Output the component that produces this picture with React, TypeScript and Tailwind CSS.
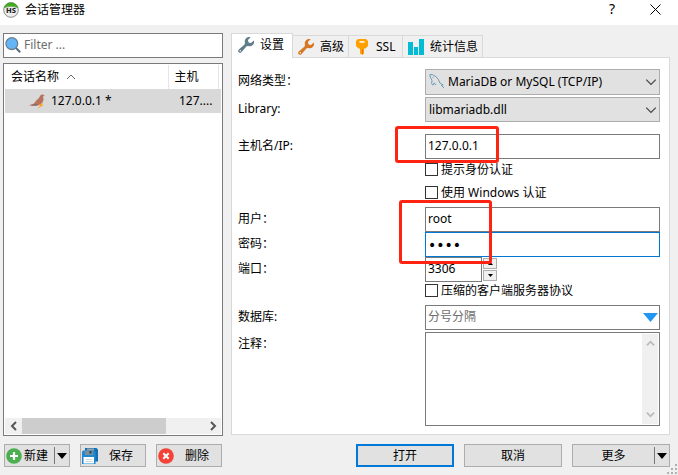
import { useState, type ReactNode } from "react";

const face = "font-['Noto_Sans','Noto_Sans_CJK_SC',sans-serif]";
const fieldBox = "h-[25px] w-full border border-[#7a7a7a] bg-white px-[2px] pb-[3px] text-xs text-black outline-none";
const buttonBox = "flex h-[23px] items-center border border-[#adadad] bg-[#e1e1e1] text-xs";

function AppLogo() {
  return (
    <svg className="size-4" viewBox="0 0 16 16" aria-hidden="true">
      <circle cx="8" cy="8" r="7.3" fill="#ededed" stroke="#8b8b8b" />
      <path d="M1.2 5.6A7.2 7.2 0 0 1 14.8 5.6Q8 2.8 1.2 5.6Z" fill="#3fae1c" stroke="#4b8f35" strokeWidth=".6" />
      <text x="8" y="11.3" textAnchor="middle" fontSize="7.5" fontWeight="800" fill="#222">HS</text>
    </svg>
  );
}

function Search() {
  return (
    <svg className="size-4 shrink-0" viewBox="0 0 16 16" aria-hidden="true">
      <path d="M10.5 10.5L15.2 15.2" stroke="#546e7a" strokeWidth="2" />
      <circle cx="6.8" cy="6.6" r="5.9" fill="#64b5f6" stroke="#6a8090" strokeWidth="1.3" />
    </svg>
  );
}

function Wrench({ className }: { className: string }) {
  return (
    <svg className={`size-4 shrink-0 ${className}`} viewBox="0 0 16 16" aria-hidden="true">
      <path
        d="M12.6 .2A4.4 4.4 0 0 0 7 5.8L6.6 7.6L.8 12.6A1.8 1.8 0 0 0 3.4 15.2L8.6 9.3L10.3 9A4.4 4.4 0 0 0 15.8 3.4L13 6.1L10.6 5.4L9.9 3Z"
        fill="currentColor"
      />
      <circle cx="2.3" cy="13.7" r=".7" fill="#fff" />
    </svg>
  );
}

function SeaLion() {
  return (
    <svg className="size-4" viewBox="0 0 16 16" aria-hidden="true">
      <path d="M0 12.6L2 11.4L5 10.6L7.5 7.2L10 5L11.3 2.4L13 1.2L15.8 2.4L14 3.6L14.6 6.5L13.4 9.8L11 11.6L7 12.4L3 12.2Z" fill="#b9735d" />
      <path d="M1 12.8L5 11.3L10 11L8 12.8Z" fill="#8c6a68" />
      <path d="M14 9.4L9 12.6H11.2L8.6 15.8L14.8 11.8H12.6Z" fill="#ff9d1e" />
    </svg>
  );
}

function Dolphin() {
  return (
    <svg className="size-4" viewBox="0 0 16 16" fill="none" stroke="#5d96b4" strokeWidth=".9" aria-hidden="true">
      <path d="M4 12.2L2.6 10.6L3 7.4L1.2 4L.9 1.6L3.4 1.7L7.2 3.8L9.6 6.8L10.9 10L14.2 12L12.4 12.4L15 15" />
      <path d="M4 12.2L5.2 9.8L7 12" />
      <path d="M3.4 4L4.2 4.8" />
    </svg>
  );
}

function Key() {
  return (
    <svg className="size-4" viewBox="0 0 16 16" aria-hidden="true">
      <path d="M4 0H12L14 2V7L11.5 9.6H10V14.5L8.4 16L6 14.5V9.6H4.5L2 7V2Z" fill="#ffa000" />
      <rect x="5.5" y="2" width="5" height="1.8" fill="#fff3d6" />
      <path d="M8.6 10V15" stroke="#d67c05" />
    </svg>
  );
}

function Bars() {
  return (
    <svg className="size-4" viewBox="0 0 16 16" fill="#00bcd4" aria-hidden="true">
      <path d="M0 3H5V16H0ZM6 8H10V16H6ZM11 0H16V16H11Z" />
    </svg>
  );
}

function Plus() {
  return (
    <svg className="size-4" viewBox="0 0 16 16" aria-hidden="true">
      <circle cx="8" cy="8" r="7.8" fill="#4caf50" />
      <path d="M8 4V12M4 8H12" stroke="#fff" strokeWidth="2.2" />
    </svg>
  );
}

function Cross() {
  return (
    <svg className="size-4" viewBox="0 0 16 16" aria-hidden="true">
      <circle cx="8" cy="8" r="7.8" fill="#f44336" />
      <path d="M5.3 5.3L10.7 10.7M10.7 5.3L5.3 10.7" stroke="#fff" strokeWidth="2" />
    </svg>
  );
}

function Disks() {
  return (
    <svg className="size-4" viewBox="0 0 16 16" aria-hidden="true">
      <path d="M3 0H14.5L16 1.5V13.5H3Z" fill="#1170b4" />
      <path d="M0 3.5L1 2.5H12L13.5 4V16H0Z" fill="#1e88d2" />
      <path d="M5 .5H12V2.5H5Z" fill="#90a4ae" />
      <path d="M3 2.5H11V7H3Z" fill="#78909c" />
      <path d="M7.5 3H9.5V5.5H7.5Z" fill="#263f50" />
      <path d="M1.5 9H12V15.5H1.5Z" fill="#fff" />
      <path d="M3.5 11.5H10.5M3.5 13.5H10.5" stroke="#cfd8dc" />
    </svg>
  );
}

function Chevron({ dir, className }: { dir: "up" | "down" | "left" | "right"; className: string }) {
  const d = { up: "M1 7L5 3L9 7", down: "M1 3L5 7L9 3", left: "M7 1L3 5L7 9", right: "M3 1L7 5L3 9" }[dir];
  return (
    <svg className={className} viewBox="0 0 10 10" fill="none" stroke="currentColor" aria-hidden="true">
      <path d={d} />
    </svg>
  );
}

function Triangle({ className }: { className: string }) {
  return (
    <svg className={className} viewBox="0 0 10 5" preserveAspectRatio="none" fill="currentColor" aria-hidden="true">
      <path d="M0 0H10L5 5Z" />
    </svg>
  );
}

function Row({ id, label, className, children }: { id: string; label: string; className?: string; children: ReactNode }) {
  return (
    <div className={`flex ${className ?? ""}`}>
      <label htmlFor={id} className="flex h-6 w-[187px] shrink-0 items-center">{label}</label>
      <div className="relative min-w-0 flex-1">{children}</div>
    </div>
  );
}

function Check({ children, className }: { children: ReactNode; className: string }) {
  return (
    <label className={`ml-[187px] flex h-[13px] items-center gap-[3px] ${className}`}>
      <input type="checkbox" className="size-[13px] appearance-none border border-[#333] bg-white checked:bg-[#0078d7]" />
      {children}
    </label>
  );
}

function Combo({ id, value, icon, className }: { id: string; value: string; icon?: ReactNode; className: string }) {
  return (
    <>
      <select id={id} className={`w-full appearance-none border border-[#adadad] bg-[#e1e1e1] pr-6 text-xs outline-none ${className}`}>
        <option>{value}</option>
      </select>
      {icon && <span className="pointer-events-none absolute top-1 left-1">{icon}</span>}
      <Chevron dir="down" className="pointer-events-none absolute top-[7px] right-[3px] size-3 text-[#444]" />
    </>
  );
}

const tabs = [
  { name: "设置", icon: <Wrench className="text-[#607d8b]" />, width: "w-[62px]" },
  { name: "高级", icon: <Wrench className="text-[#d87722]" />, width: "w-[56px]" },
  { name: "SSL", icon: <Key />, width: "w-[54px]" },
  { name: "统计信息", icon: <Bars />, width: "w-[80px]" },
];

function Tabs() {
  const [current, setCurrent] = useState(0);
  return (
    <div role="tablist" className="flex h-6 items-end">
      {tabs.map((tab, i) => (
        <button
          key={tab.name}
          role="tab"
          aria-selected={i === current}
          onClick={() => setCurrent(i)}
          className={`flex items-center gap-[6px] whitespace-nowrap border-t border-r border-[#d9d9d9] ${tab.width} ${
            i === current ? "relative -mb-px h-[25px] border-l bg-white pb-[2px] pl-[6px]" : "h-[22px] bg-[#f0f0f0] pl-[5px]"
          }`}
        >
          {tab.icon}
          {tab.name}
        </button>
      ))}
    </div>
  );
}

function Sessions() {
  return (
    <div className="flex w-[220px] shrink-0 flex-col">
      <div className="flex h-[25px] items-center border border-[#7a7a7a] bg-white pb-px pl-px">
        <Search />
        <input aria-label="Filter" placeholder="Filter ..." className="min-w-0 flex-1 px-[3px] text-xs outline-none placeholder:text-[#6d6d6d]" />
      </div>
      <div className="mt-[5px] flex flex-1 flex-col border border-[#7a7a7a] bg-white p-px">
        <table className="w-full table-fixed border-collapse text-left">
          <thead>
            <tr className="h-6">
              <th className="w-[163px] border-r border-[#e5e5e5] p-0 pl-[6px] font-normal">
                <span className="flex items-center gap-[7px]">会话名称 <Chevron dir="up" className="size-[10px] text-[#666]" /></span>
              </th>
              <th className="w-[50px] border-r border-[#e5e5e5] p-0 pl-[6px] font-normal">主机</th>
              <th className="p-0" />
            </tr>
          </thead>
          <tbody>
            <tr className="h-6 bg-[#d9d9d9]">
              <td className="p-0 pl-6"><span className="flex items-center gap-[6px]"><SeaLion />127.0.0.1 *</span></td>
              <td className="p-0 pl-[11px]">127....</td>
              <td className="p-0" />
            </tr>
          </tbody>
        </table>
        <div className="mt-auto flex h-4 items-center bg-[#f0f0f0] text-[#555]">
          <span className="flex w-[17px] justify-center"><Chevron dir="left" className="size-[10px] stroke-2" /></span>
          <span className="h-4 w-2/3 bg-[#cdcdcd]" />
          <span className="ml-auto flex w-[17px] justify-center"><Chevron dir="right" className="size-[10px] stroke-2" /></span>
        </div>
      </div>
      <div className="mt-2 flex justify-between px-px">
        <button className={`${buttonBox} w-[66px] gap-[2px] pl-px`}>
          <Plus />新建
          <span className="ml-auto flex h-[17px] items-center border-l border-[#777] px-[2px]"><Triangle className="h-[6px] w-[10px]" /></span>
        </button>
        <button className={`${buttonBox} w-[66px] gap-[11px] pl-px`}><Disks />保存</button>
        <button className={`${buttonBox} w-[66px] gap-[11px] pl-px`}><Cross />删除</button>
      </div>
    </div>
  );
}

function Settings() {
  return (
    <div className="flex flex-1 flex-col border border-[#d9d9d9] bg-white pt-[11px] pr-[9px] pb-2 pl-[6px]">
      <Row id="net" label="网络类型：">
        <Combo id="net" value="MariaDB or MySQL (TCP/IP)" icon={<Dolphin />} className="h-[26px] pl-[22px]" />
      </Row>
      <Row id="lib" label="Library:" className="mt-[2px]">
        <Combo id="lib" value="libmariadb.dll" className="h-[25px] pl-[3px]" />
      </Row>
      <Row id="host" label="主机名/IP:" className="mt-3">
        <input id="host" defaultValue="127.0.0.1" className={fieldBox} />
        <span className="pointer-events-none absolute -top-2 -left-[30px] h-[37px] w-[104px] rounded-[3px] border-3 border-[#ff2312]" />
      </Row>
      <Check className="mt-1">提示身份认证</Check>
      <Check className="mt-[10px]">使用 Windows 认证</Check>
      <Row id="user" label="用户：" className="mt-2">
        <input id="user" defaultValue="root" className={fieldBox} />
        <span className="pointer-events-none absolute -top-[7px] -left-[26px] z-10 h-[64px] w-[93px] rounded-[3px] border-3 border-[#ff2312]" />
      </Row>
      <Row id="password" label="密码：">
        <input
          id="password"
          type="password"
          defaultValue="root"
          className="h-[25px] w-full border border-[#0078d7] bg-white px-[2px] font-['DejaVu_Sans',sans-serif] text-sm outline-none"
        />
      </Row>
      <Row id="port" label="端口：">
        <div className="flex gap-px">
          <div className="w-[57px]"><input id="port" defaultValue="3306" className={fieldBox} /></div>
          <div className="flex flex-col gap-px pt-px">
            <button aria-label="增加" className="flex h-[11px] w-[14px] items-center justify-center border border-[#adadad] bg-[#f0f0f0]"><Triangle className="h-[3px] w-[5px] rotate-180" /></button>
            <button aria-label="减少" className="flex h-[11px] w-[14px] items-center justify-center border border-[#adadad] bg-[#f0f0f0]"><Triangle className="h-[3px] w-[5px]" /></button>
          </div>
        </div>
      </Row>
      <Check className="mt-[2px]">压缩的客户端服务器协议</Check>
      <Row id="db" label="数据库:" className="mt-2">
        <input id="db" placeholder="分号分隔" className={`${fieldBox} placeholder:text-[#6d6d6d]`} />
        <button aria-label="选择数据库" className="absolute top-2 right-[2px] text-[#2196f3]"><Triangle className="h-[9px] w-[15px]" /></button>
      </Row>
      <Row id="note" label="注释：" className="mt-[2px] flex-1">
        <div className="flex h-full min-h-[94px] border border-[#7a7a7a] p-px">
          <textarea id="note" className="min-w-0 flex-1 resize-none px-[2px] text-xs outline-none" />
          <div className="flex w-4 flex-col items-center justify-between bg-[#f0f0f0] py-[5px] text-[#bbb]">
            <Chevron dir="up" className="size-[9px] stroke-2" />
            <Chevron dir="down" className="size-[9px] stroke-2" />
          </div>
        </div>
      </Row>
    </div>
  );
}

export default function App() {
  return (
    <div className={`relative flex min-h-screen w-full flex-col bg-[#f0f0f0] text-xs text-black ${face}`}>
      <header className="flex h-[25px] items-start bg-white pl-[3px]">
        <div className="flex h-[19px] items-center gap-[6px]"><AppLogo /><h1>会话管理器</h1></div>
        <button aria-label="帮助" className="ml-auto h-[18px] w-[14px] text-sm leading-[18px]">?</button>
        <button aria-label="关闭" className="mr-[17px] ml-[31px] flex h-[18px] items-center">
          <svg className="size-[11px]" viewBox="0 0 11 11" stroke="#000" aria-hidden="true"><path d="M.5 .5L10.5 10.5M10.5 .5L.5 10.5" /></svg>
        </button>
      </header>
      <main className="flex flex-1 gap-2 pt-2 pr-2 pb-2 pl-[3px]">
        <Sessions />
        <div className="flex min-w-0 flex-1 flex-col">
          <Tabs />
          <Settings />
          <div className="mt-[9px] flex justify-end gap-[10px]">
            <button className="flex h-[23px] w-[98px] items-center justify-center border-2 border-[#0078d7] bg-[#e1e1e1]">打开</button>
            <button className={`${buttonBox} w-[98px] justify-center`}>取消</button>
            <button className={`${buttonBox} w-[98px]`}>
              <span className="flex-1 text-center">更多</span>
              <span className="flex h-[17px] items-center border-l border-[#777] px-[2px]"><Triangle className="h-[6px] w-[10px]" /></span>
            </button>
          </div>
        </div>
      </main>
      <svg className="absolute right-0 bottom-0 size-[11px]" viewBox="0 0 11 11" fill="#b0b0b0" aria-hidden="true">
        <path d="M8 0H10V2H8ZM4 4H6V6H4ZM8 4H10V6H8ZM0 8H2V10H0ZM4 8H6V10H4ZM8 8H10V10H8Z" />
      </svg>
    </div>
  );
}
